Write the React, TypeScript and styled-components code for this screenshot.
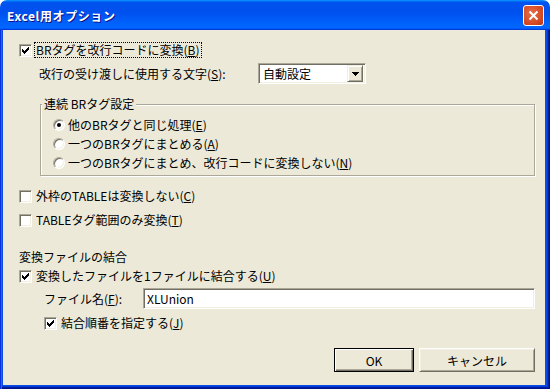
import styled, { createGlobalStyle } from "styled-components";

const GlobalStyle = createGlobalStyle`
  html, body {
    margin: 0;
    padding: 0;
    background: #fff;
  }
  body {
    font-family: "Noto Sans CJK JP", "Noto Sans", sans-serif;
    font-size: 12px;
    color: #000;
  }
`;

const Window = styled.div`
  width: 550px;
  height: 389px;
  display: flex;
  flex-direction: column;
`;

const TitleBar = styled.div`
  height: 30px;
  flex: none;
  box-sizing: border-box;
  display: flex;
  align-items: center;
  justify-content: space-between;
  padding: 0 6px 0 7px;
  border-radius: 7px 7px 0 0;
  background: linear-gradient(
    180deg,
    #0997ff,
    #0053ee 8%,
    #0050ee 40%,
    #0066ff 88%,
    #0066ff 93%,
    #005bff 95%,
    #003dd7 96%,
    #003dd7
  );
`;

const Title = styled.span`
  color: #fff;
  font-weight: bold;
  font-size: 12px;
  letter-spacing: 0.6px;
  text-shadow: 1px 1px #0f1089;
`;

const CloseButton = styled.div`
  width: 21px;
  height: 21px;
  box-sizing: border-box;
  border: 1px solid #fff;
  border-radius: 3px;
  background: radial-gradient(circle at 40% 40%, #e8704a, #d2461f 70%, #b8341a);
  display: flex;
  align-items: center;
  justify-content: center;
`;

const Frame = styled.div`
  flex: 1;
  display: flex;
  padding: 0 5px 4px 3px;
  background: #0b4ce2;
  box-shadow: inset 1px 0 #0831d9, inset 2px 0 #166aee, inset -1px -1px #00138c,
    inset -2px -2px #001ea0, inset -3px -3px #003bda;
`;

const Body = styled.div`
  flex: 1;
  display: flex;
  flex-direction: column;
  background: #ece9d8;
  padding: 12px 10px 0 16px;
`;

const Row = styled.div<{ $mt: number; $indent?: number; $h?: number }>`
  display: flex;
  align-items: center;
  height: ${(p) => p.$h ?? 16}px;
  margin-top: ${(p) => p.$mt}px;
  margin-left: ${(p) => p.$indent ?? 0}px;
  line-height: 16px;
  white-space: nowrap;
`;

const Sunken = styled.span`
  box-sizing: border-box;
  border: 1px solid;
  border-color: #aca899 #fff #fff #aca899;
  box-shadow: inset 1px 1px #716f64, inset -1px -1px #f1efe2;
  background: #fff;
`;

const CheckBox = styled(Sunken)`
  width: 13px;
  height: 13px;
  flex: none;
  display: flex;
  align-items: center;
  justify-content: center;
  margin-right: 4px;
`;

const RadioDot = styled(Sunken)`
  width: 12px;
  height: 12px;
  flex: none;
  border-radius: 50%;
  display: flex;
  align-items: center;
  justify-content: center;
  margin-right: 3px;
`;

const Dot = styled.span`
  width: 4px;
  height: 4px;
  border-radius: 50%;
  background: #000;
`;

const Focus = styled.span`
  border: 1px dotted #000;
  padding: 0 1px;
  margin-left: -2px;
  line-height: 14px;
`;

const Key = styled.span`
  text-decoration: underline;
`;

const ComboLabel = styled.span`
  width: 219px;
  flex: none;
`;

const Combo = styled(Sunken)`
  width: 108px;
  height: 21px;
  display: flex;
  align-items: center;
  justify-content: space-between;
  padding: 2px 2px 2px 4px;
`;

const ArrowButton = styled.span`
  width: 16px;
  height: 17px;
  box-sizing: border-box;
  border: 1px solid;
  border-color: #f1efe2 #716f64 #716f64 #f1efe2;
  box-shadow: inset 1px 1px #fff, inset -1px -1px #aca899;
  background: #ece9d8;
  display: flex;
  align-items: center;
  justify-content: center;
`;

const Group = styled.fieldset`
  margin: 13px 0 0 21px;
  padding: 4px 0 3px 0;
  border: 1px solid #aca899;
  box-shadow: inset 1px 1px #fff, 1px 1px #fff;
  min-width: 0;
`;

const Legend = styled.legend`
  margin-left: 1px;
  padding: 0 2px;
  line-height: 14px;
  background: #ece9d8;
`;

const RadioList = styled.div`
  display: flex;
  flex-direction: column;
  padding-left: 12px;
`;

const RadioRow = styled.div`
  display: flex;
  align-items: center;
  height: 19px;
  white-space: nowrap;
`;

const FileLabel = styled.span`
  width: 99px;
  flex: none;
`;

const TextInput = styled.input`
  flex: 1;
  min-width: 0;
  height: 21px;
  box-sizing: border-box;
  border: 1px solid;
  border-color: #aca899 #fff #fff #aca899;
  box-shadow: inset 1px 1px #716f64, inset -1px -1px #f1efe2;
  background: #fff;
  padding: 0 3px;
  font: inherit;
  outline: none;
`;

const ButtonBar = styled.div`
  display: flex;
  justify-content: flex-end;
  gap: 5px;
  margin-top: 17px;
`;

const Button = styled.button<{ $w: number; $default?: boolean }>`
  width: ${(p) => p.$w}px;
  height: 24px;
  box-sizing: border-box;
  margin: 0;
  padding: 0;
  font: inherit;
  color: #000;
  background: #ece9d8;
  border: 1px solid;
  border-color: ${(p) =>
    p.$default ? "#000" : "#fff #716f64 #716f64 #fff"};
  box-shadow: ${(p) =>
    p.$default
      ? "inset 1px 1px #fff, inset -1px -1px #716f64, inset -2px -2px #aca899"
      : "inset 1px 1px #f1efe2, inset -1px -1px #aca899"};
`;

const Check = ({ checked }: { checked?: boolean }) => (
  <CheckBox>
    {checked && (
      <svg width="7" height="7" viewBox="0 0 7 7" shapeRendering="crispEdges">
        <path d="M6 0h1v3h-1v1h-1v1h-1v1h-1v1h-1v-1h-1v-1h-1v-3h1v1h1v1h1v-1h1v-1h1z" fill="#000" />
      </svg>
    )}
  </CheckBox>
);

const Radio = ({ checked }: { checked?: boolean }) => (
  <RadioDot>{checked && <Dot />}</RadioDot>
);

export default function App() {
  return (
    <>
      <GlobalStyle />
      <Window>
        <TitleBar>
          <Title>Excel用オプション</Title>
          <CloseButton>
            <svg width="11" height="11" viewBox="0 0 11 11">
              <path d="M1.5 1.5l8 8M9.5 1.5l-8 8" stroke="#fff" strokeWidth="2" />
            </svg>
          </CloseButton>
        </TitleBar>
        <Frame>
          <Body>
            <Row $mt={0}>
              <Check checked />
              <Focus>
                BRタグを改行コードに変換(<Key>B</Key>)
              </Focus>
            </Row>
            <Row $mt={5} $h={21} $indent={20}>
              <ComboLabel>
                改行の受け渡しに使用する文字(<Key>S</Key>):
              </ComboLabel>
              <Combo>
                <span>自動設定</span>
                <ArrowButton>
                  <svg width="7" height="4" viewBox="0 0 7 4" shapeRendering="crispEdges">
                    <path d="M0 0h7v1h-1v1h-1v1h-1v1h-1v-1h-1v-1h-1v-1h-1z" fill="#000" />
                  </svg>
                </ArrowButton>
              </Combo>
            </Row>
            <Group>
              <Legend>連続 BRタグ設定</Legend>
              <RadioList>
                <RadioRow>
                  <Radio checked />
                  他のBRタグと同じ処理(<Key>E</Key>)
                </RadioRow>
                <RadioRow>
                  <Radio />
                  一つのBRタグにまとめる(<Key>A</Key>)
                </RadioRow>
                <RadioRow>
                  <Radio />
                  一つのBRタグにまとめ、改行コードに変換しない(<Key>N</Key>)
                </RadioRow>
              </RadioList>
            </Group>
            <Row $mt={12}>
              <Check />
              外枠のTABLEは変換しない(<Key>C</Key>)
            </Row>
            <Row $mt={8}>
              <Check />
              TABLEタグ範囲のみ変換(<Key>T</Key>)
            </Row>
            <Row $mt={21}>変換ファイルの結合</Row>
            <Row $mt={3}>
              <Check checked />
              変換したファイルを1ファイルに結合する(<Key>U</Key>)
            </Row>
            <Row $mt={4} $h={21} $indent={25}>
              <FileLabel>
                ファイル名(<Key>F</Key>):
              </FileLabel>
              <TextInput defaultValue="XLUnion" readOnly />
            </Row>
            <Row $mt={6} $indent={25}>
              <Check checked />
              結合順番を指定する(<Key>J</Key>)
            </Row>
            <ButtonBar>
              <Button $w={80} $default>
                OK
              </Button>
              <Button $w={116}>キャンセル</Button>
            </ButtonBar>
          </Body>
        </Frame>
      </Window>
    </>
  );
}
